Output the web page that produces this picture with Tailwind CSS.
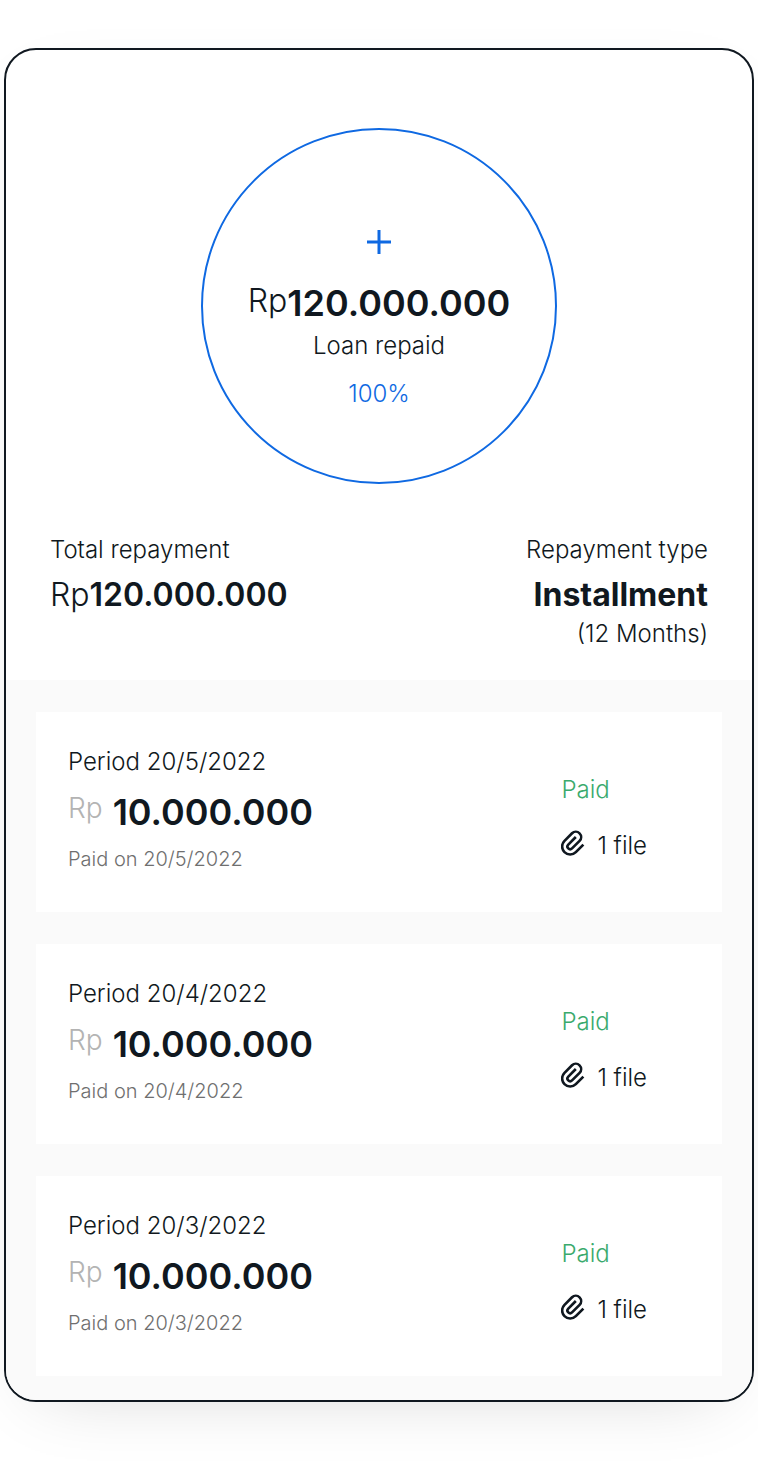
<!DOCTYPE html>
<html lang="en">
<head>
    <meta charset="UTF-8">
    <meta name="viewport" content="width=device-width, initial-scale=1.0">
    <title>Loan repayment</title>
    <script src="https://cdn.jsdelivr.net/npm/@tailwindcss/browser@4"></script>
</head>
<body class="bg-white font-['Inter',sans-serif] text-2xl leading-8 font-light text-[#101820]">
    <main class="mx-1 mt-12 mb-20 overflow-hidden rounded-[32px] border-2 border-[#101820] bg-white shadow-[0_20px_72px_-36px_rgba(0,0,0,0.2)]">
        <!-- Summary -->
        <section class="px-11 pt-[78px] pb-[30px]">
            <div class="mx-auto flex size-[356px] flex-col items-center rounded-full border-2 border-[#0f69e2] pt-[100px]">
                <svg class="size-6 text-[#0f69e2]" viewBox="0 0 24 24" fill="none" stroke="currentColor" stroke-width="3" aria-hidden="true">
                    <path d="M12 0v24M0 12h24"/>
                </svg>
                <p class="mt-6 flex"><span class="text-[32px] leading-[46px]">Rp</span><strong class="text-4xl leading-[50px] font-semibold">120.000.000</strong></p>
                <p class="mt-0.5">Loan repaid</p>
                <p class="mt-4 text-[#0f69e2]">100%</p>
            </div>

            <div class="mt-[50px] flex justify-between">
                <div>
                    <p>Total repayment</p>
                    <p class="mt-2 text-[32px] leading-[42px]">Rp<strong class="font-semibold">120.000.000</strong></p>
                </div>
                <div class="text-right">
                    <p>Repayment type</p>
                    <p class="mt-2 text-[32px] leading-[42px] font-bold">Installment</p>
                    <p class="mt-0.5">(12 Months)</p>
                </div>
            </div>
        </section>

        <!-- Payments -->
        <ul class="flex flex-col gap-8 bg-[#fafafa] px-[30px] pt-8 pb-6">
            <li class="flex justify-between bg-white pt-8 pr-[75px] pb-[30px] pl-8">
                <div>
                    <h2 class="mt-0.5">Period 20/5/2022</h2>
                    <p class="mt-2.5 flex gap-2.5"><span class="text-[28px] leading-10 text-[#b3b3b3]">Rp</span><strong class="text-4xl leading-12 font-semibold">10.000.000</strong></p>
                    <p class="text-xl leading-[46px] text-[#6f6f6f]">Paid on 20/5/2022</p>
                </div>
                <div class="pt-[30px]">
                    <p class="text-[#3aaa6d]">Paid</p>
                    <a href="#" class="mt-6 flex items-start gap-3">
                        <svg class="h-[26px] w-6" viewBox="3 2 18 19" fill="currentColor" aria-hidden="true"><path d="M14.828 7.757l-5.656 5.657a1 1 0 1 0 1.414 1.414l5.657-5.656A3 3 0 1 0 12 4.929l-5.657 5.657a5 5 0 1 0 7.071 7.07L19.071 12l1.414 1.414-5.657 5.657a7 7 0 1 1-9.9-9.9l5.658-5.656a5 5 0 0 1 7.07 7.07L12 16.244A3 3 0 1 1 7.757 12l5.657-5.657 1.414 1.414z"/></svg>
                        1 file
                    </a>
                </div>
            </li>
            <li class="flex justify-between bg-white pt-8 pr-[75px] pb-[30px] pl-8">
                <div>
                    <h2 class="mt-0.5">Period 20/4/2022</h2>
                    <p class="mt-2.5 flex gap-2.5"><span class="text-[28px] leading-10 text-[#b3b3b3]">Rp</span><strong class="text-4xl leading-12 font-semibold">10.000.000</strong></p>
                    <p class="text-xl leading-[46px] text-[#6f6f6f]">Paid on 20/4/2022</p>
                </div>
                <div class="pt-[30px]">
                    <p class="text-[#3aaa6d]">Paid</p>
                    <a href="#" class="mt-6 flex items-start gap-3">
                        <svg class="h-[26px] w-6" viewBox="3 2 18 19" fill="currentColor" aria-hidden="true"><path d="M14.828 7.757l-5.656 5.657a1 1 0 1 0 1.414 1.414l5.657-5.656A3 3 0 1 0 12 4.929l-5.657 5.657a5 5 0 1 0 7.071 7.07L19.071 12l1.414 1.414-5.657 5.657a7 7 0 1 1-9.9-9.9l5.658-5.656a5 5 0 0 1 7.07 7.07L12 16.244A3 3 0 1 1 7.757 12l5.657-5.657 1.414 1.414z"/></svg>
                        1 file
                    </a>
                </div>
            </li>
            <li class="flex justify-between bg-white pt-8 pr-[75px] pb-[30px] pl-8">
                <div>
                    <h2 class="mt-0.5">Period 20/3/2022</h2>
                    <p class="mt-2.5 flex gap-2.5"><span class="text-[28px] leading-10 text-[#b3b3b3]">Rp</span><strong class="text-4xl leading-12 font-semibold">10.000.000</strong></p>
                    <p class="text-xl leading-[46px] text-[#6f6f6f]">Paid on 20/3/2022</p>
                </div>
                <div class="pt-[30px]">
                    <p class="text-[#3aaa6d]">Paid</p>
                    <a href="#" class="mt-6 flex items-start gap-3">
                        <svg class="h-[26px] w-6" viewBox="3 2 18 19" fill="currentColor" aria-hidden="true"><path d="M14.828 7.757l-5.656 5.657a1 1 0 1 0 1.414 1.414l5.657-5.656A3 3 0 1 0 12 4.929l-5.657 5.657a5 5 0 1 0 7.071 7.07L19.071 12l1.414 1.414-5.657 5.657a7 7 0 1 1-9.9-9.9l5.658-5.656a5 5 0 0 1 7.07 7.07L12 16.244A3 3 0 1 1 7.757 12l5.657-5.657 1.414 1.414z"/></svg>
                        1 file
                    </a>
                </div>
            </li>
        </ul>
    </main>
</body>
</html>
